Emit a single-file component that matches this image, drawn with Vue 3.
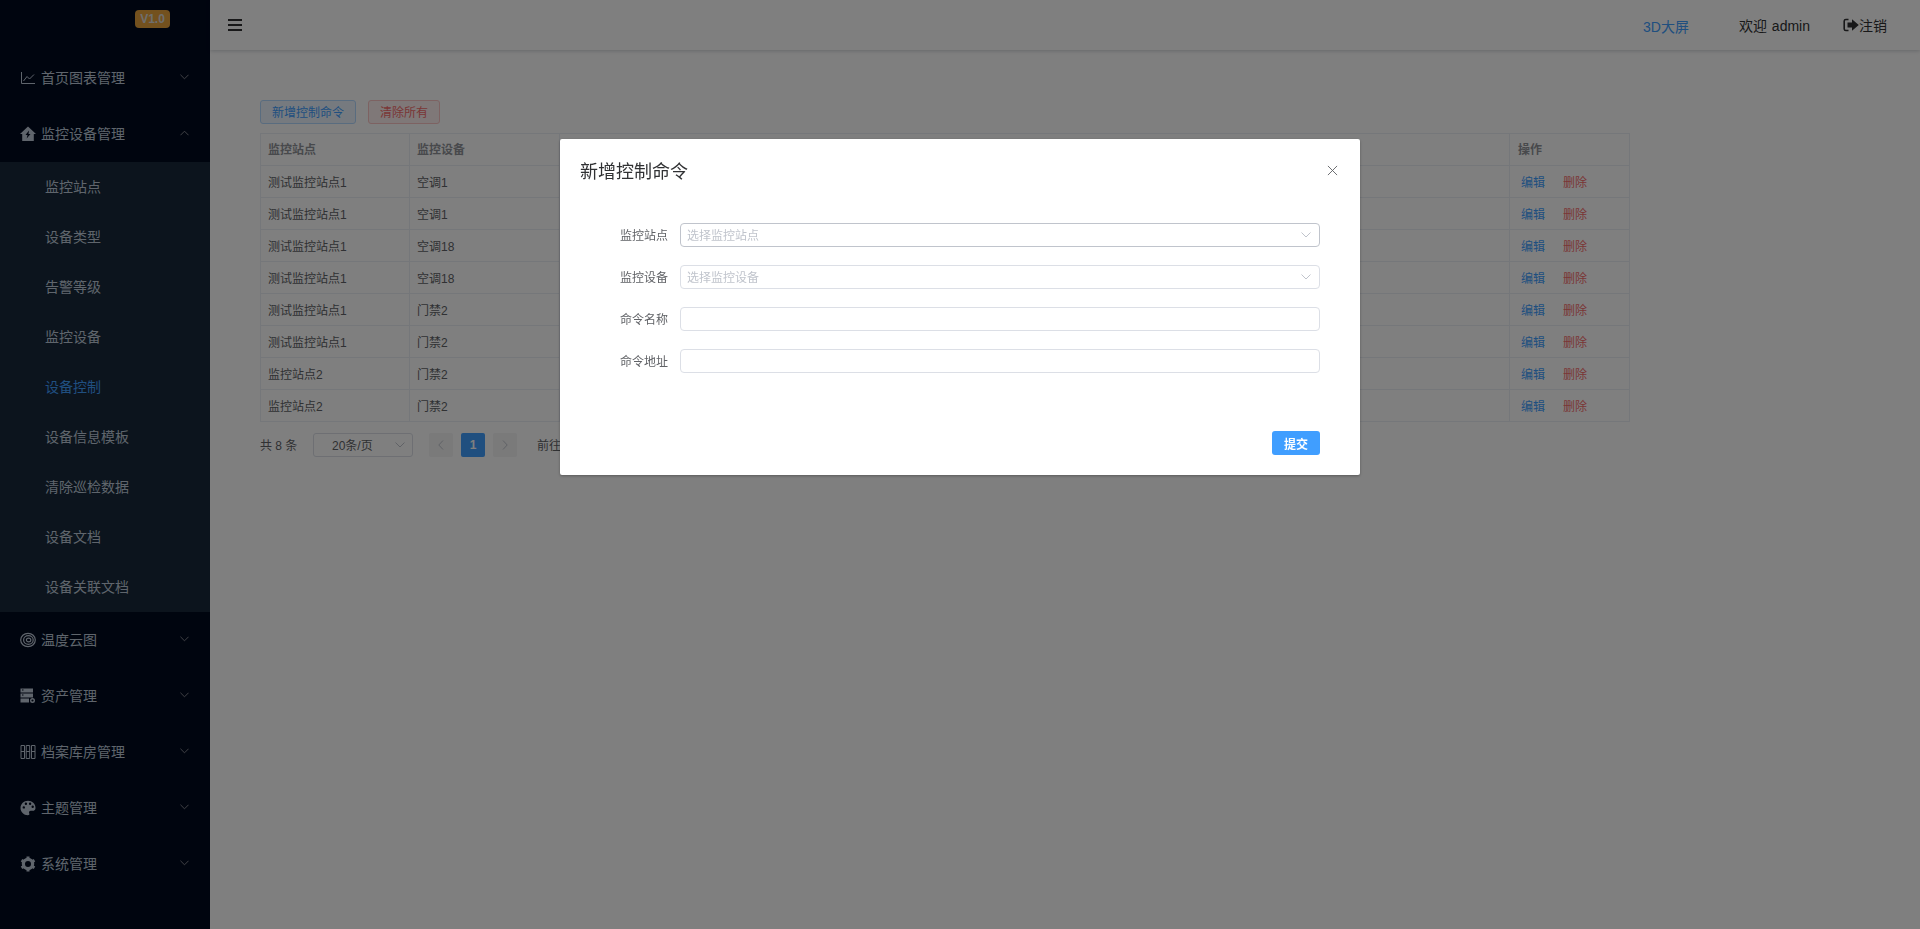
<script setup>
const menusTop = [
  { name: '首页图表管理', icon: 'chart' },
  { name: '监控设备管理', icon: 'home', open: true }
]
const subMenus = ['监控站点', '设备类型', '告警等级', '监控设备', '设备控制', '设备信息模板', '清除巡检数据', '设备文档', '设备关联文档']
const menusBottom = [
  { name: '温度云图', icon: 'rings' },
  { name: '资产管理', icon: 'server' },
  { name: '档案库房管理', icon: 'shelves' },
  { name: '主题管理', icon: 'palette' },
  { name: '系统管理', icon: 'gear' }
]
const rows = [
  ['测试监控站点1', '空调1'],
  ['测试监控站点1', '空调1'],
  ['测试监控站点1', '空调18'],
  ['测试监控站点1', '空调18'],
  ['测试监控站点1', '门禁2'],
  ['测试监控站点1', '门禁2'],
  ['监控站点2', '门禁2'],
  ['监控站点2', '门禁2']
]
const fields = [
  { label: '监控站点', placeholder: '选择监控站点', select: true, hover: true },
  { label: '监控设备', placeholder: '选择监控设备', select: true },
  { label: '命令名称' },
  { label: '命令地址' }
]
</script>

<template>
  <div class="layout">
    <aside class="sidebar">
      <div class="logo"><span class="version">V1.0</span></div>
      <div v-for="m in menusTop" :key="m.name" class="menu-item">
        <svg class="menu-icon" viewBox="0 0 16 16">
          <path v-if="m.icon === 'chart'" d="M1.500 2v11.500H15M3.500 11l3.500-4.500 2.500 2.500 4.500-4.500" fill="none" stroke="currentColor" stroke-width="1" />
          <path v-else d="M8 .5 0 8h2.200v7h11.600V8H16zM9 4.500 5.500 9h2l-.8 3.500L10.500 8h-2z" fill="currentColor" fill-rule="evenodd" />
        </svg>
        <span class="menu-text">{{ m.name }}</span>
        <svg class="arrow" :class="{ up: m.open }" viewBox="0 0 10 6"><path d="M.5.500 5 5 9.500.5" fill="none" stroke="currentColor" /></svg>
      </div>
      <div class="submenu">
        <div v-for="s in subMenus" :key="s" class="sub-item" :class="{ active: s === '设备控制' }">{{ s }}</div>
      </div>
      <div v-for="m in menusBottom" :key="m.name" class="menu-item">
        <svg class="menu-icon" viewBox="0 0 16 16">
          <g v-if="m.icon === 'rings'" fill="none" stroke="currentColor" stroke-width="1.200">
            <ellipse cx="8" cy="8" rx="7.300" ry="6.700" />
            <ellipse cx="8.400" cy="8" rx="4.800" ry="4.300" />
            <ellipse cx="8.600" cy="8" rx="2.200" ry="1.900" />
          </g>
          <g v-else-if="m.icon === 'server'">
            <path d="M.5.500h12.500v4H.5zM.5 5.500h12.500v4H.5zM.5 10.500h8.500v4H.5z" fill="currentColor" />
            <path d="M2 2h1.500M2 7h1.500" stroke="#000a1f" />
            <circle cx="12.500" cy="12.500" r="2.600" fill="#000a1f" />
            <circle cx="12.500" cy="12.500" r="1.800" fill="none" stroke="currentColor" stroke-width="1.400" />
          </g>
          <g v-else-if="m.icon === 'shelves'" fill="none" stroke="currentColor">
            <path d="M1 1.500h3.500v13H1zM6.200 1.500h3.500v13H6.200zM11.500 1.500H15v13h-3.500zM1 7.500h3.500M6.200 7.500h3.500M11.500 7.500H15" />
          </g>
          <path v-else-if="m.icon === 'palette'" d="M8 .8C3.800.8.500 4 .5 8s3.300 7.200 7.300 7.200c1.500 0 1.900-1 1.400-2-.6-1.200.2-2.400 1.600-2.400h2c1.500 0 2.700-1.200 2.700-2.900C15.500 3.700 12.100.8 8 .8zM3.800 8.600a1.200 1.200 0 1 1 0-2.400 1.200 1.200 0 0 1 0 2.400zM5.900 5a1.200 1.200 0 1 1 0-2.400 1.200 1.200 0 0 1 0 2.400zm4.200 0a1.200 1.200 0 1 1 0-2.400 1.200 1.200 0 0 1 0 2.400zm2.600 3a1.200 1.200 0 1 1 0-2.400 1.200 1.200 0 0 1 0 2.400z" fill="currentColor" fill-rule="evenodd" />
          <g v-else stroke="currentColor" fill="none">
            <circle cx="8" cy="8" r="4.600" stroke-width="3.200" />
            <path d="M8 .5v15M1.500 4.250l13 7.500M14.500 4.250l-13 7.500" stroke-width="3" stroke-dasharray="3 9 3" />
          </g>
        </svg>
        <span class="menu-text">{{ m.name }}</span>
        <svg class="arrow" viewBox="0 0 10 6"><path d="M.5.500 5 5 9.500.5" fill="none" stroke="currentColor" /></svg>
      </div>
    </aside>

    <div class="main">
      <header class="topbar">
        <svg class="hamburger" viewBox="0 0 14 12"><path d="M0 0h14v2H0zM0 5h14v2H0zM0 10h14v2H0z" fill="currentColor" /></svg>
        <div class="top-right">
          <a class="screen-link">3D大屏</a>
          <span class="welcome">欢迎 admin</span>
          <span class="logout">
            <svg viewBox="0 0 16 14"><path d="M5.500 1.500H2.800A1.600 1.600 0 0 0 1.200 3v8a1.600 1.600 0 0 0 1.600 1.500h2.700" fill="none" stroke="currentColor" stroke-width="1.600" /><path d="M9 1.200 15.800 7 9 12.800V9.500H4.500v-5H9z" fill="currentColor" /></svg>注销
          </span>
        </div>
      </header>

      <section class="content">
        <div class="toolbar">
          <button class="btn btn-primary">新增控制命令</button>
          <button class="btn btn-danger">清除所有</button>
        </div>
        <table class="grid">
          <colgroup>
            <col style="width: 149px" />
            <col style="width: 150px" />
            <col />
            <col style="width: 120px" />
          </colgroup>
          <thead>
            <tr>
              <th>监控站点</th>
              <th>监控设备</th>
              <th></th>
              <th class="op-head">操作</th>
            </tr>
          </thead>
          <tbody>
            <tr v-for="(r, i) in rows" :key="i">
              <td>{{ r[0] }}</td>
              <td>{{ r[1] }}</td>
              <td></td>
              <td class="actions"><a class="edit">编辑</a><a class="del">删除</a></td>
            </tr>
          </tbody>
        </table>
        <div class="pager">
          <span class="total">共 8 条</span>
          <div class="size-select">
            <span>20条/页</span>
            <svg viewBox="0 0 10 6"><path d="M.5.500 5 5 9.500.5" fill="none" stroke="currentColor" /></svg>
          </div>
          <div class="page-btn">
            <svg viewBox="0 0 6 10"><path d="M5 .5.800 5 5 9.500" fill="none" stroke="currentColor" /></svg>
          </div>
          <div class="page-btn current">1</div>
          <div class="page-btn">
            <svg viewBox="0 0 6 10"><path d="M1 .5 5.200 5 1 9.500" fill="none" stroke="currentColor" /></svg>
          </div>
          <span class="jump">前往</span>
        </div>
      </section>
    </div>

    <div class="mask"></div>

    <div class="dialog-wrap">
      <div class="dialog">
        <div class="dialog-head">
          <span class="dialog-title">新增控制命令</span>
          <svg class="close" viewBox="0 0 12 12"><path d="M1 1l10 10M11 1 1 11" fill="none" stroke="currentColor" /></svg>
        </div>
        <div class="form">
          <div v-for="f in fields" :key="f.label" class="form-row">
            <label>{{ f.label }}</label>
            <div class="input" :class="{ hover: f.hover }">
              <span v-if="f.placeholder">{{ f.placeholder }}</span>
              <svg v-if="f.select" viewBox="0 0 10 6"><path d="M.5.500 5 5 9.500.5" fill="none" stroke="currentColor" /></svg>
            </div>
          </div>
        </div>
        <div class="dialog-foot">
          <button class="submit">提交</button>
        </div>
      </div>
    </div>
  </div>
</template>

<style>
html, body {
  margin: 0;
  height: 100%;
  overflow: hidden;
}
</style>

<style scoped>
.layout {
  display: flex;
  width: 1920px;
  height: 929px;
  overflow: hidden;
  background: #fff;
  font-family: "Liberation Sans", "Noto Sans CJK SC", sans-serif;
  color: #606266;
}

.sidebar {
  flex: none;
  width: 210px;
  background: #000a1f;
  color: #bfcbd9;
  font-size: 14px;
}

.logo {
  height: 50px;
  padding: 10px 40px 0 0;
  box-sizing: border-box;
  display: flex;
  justify-content: flex-end;
  align-items: flex-start;
}

.version {
  width: 35px;
  height: 18px;
  line-height: 18px;
  text-align: center;
  border-radius: 4px;
  background: #e6a23c;
  color: #ddd;
  font-size: 12px;
  font-weight: bold;
}

.menu-item {
  display: flex;
  align-items: center;
  height: 56px;
  padding-left: 20px;
  box-sizing: border-box;
}

.menu-icon {
  width: 16px;
  height: 16px;
  margin: 0 5px 0 0;
  flex: none;
}

.menu-text {
  margin-top: -2px;
}

.arrow {
  width: 9px;
  height: 6px;
  margin-left: auto;
  margin-right: 21px;
  margin-top: -2px;
  color: #909399;
}

.arrow.up {
  transform: rotate(180deg);
}

.submenu {
  background: #18283a;
}

.sub-item {
  height: 50px;
  line-height: 50px;
  padding-left: 45px;
}

.sub-item.active {
  color: #409eff;
}

.main {
  flex: 1;
  min-width: 0;
}

.topbar {
  height: 50px;
  display: flex;
  align-items: center;
  padding: 0 33px 0 18px;
  box-sizing: border-box;
  box-shadow: 0 1px 4px rgba(0, 21, 41, 0.2);
  background: #fff;
  color: #303133;
  font-size: 14px;
}

.hamburger {
  width: 14px;
  height: 12px;
  margin-top: -1px;
}

.top-right {
  margin-left: auto;
  display: flex;
  align-items: center;
}

.screen-link {
  color: #409eff;
  margin-right: 50px;
  margin-top: 1px;
}

.welcome {
  margin-right: 33px;
  margin-top: -1px;
  word-spacing: 1px;
}

.logout {
  display: flex;
  align-items: center;
}

.logout svg {
  width: 16px;
  height: 14px;
}

.content {
  padding: 50px 50px 0 50px;
  width: 1370px;
}

.toolbar {
  display: flex;
  gap: 12px;
  margin-bottom: 9px;
}

.btn {
  height: 24px;
  padding: 0 11px 2px;
  border: 1px solid;
  border-radius: 3px;
  font: 12px "Liberation Sans", "Noto Sans CJK SC", sans-serif;
}

.btn-primary {
  width: 96px;
  background: #ecf5ff;
  border-color: #b3d8ff;
  color: #409eff;
}

.btn-danger {
  background: #fef0f0;
  border-color: #fbc4c4;
  color: #f56c6c;
}

.grid {
  width: 1370px;
  border-collapse: collapse;
  table-layout: fixed;
  font-size: 12px;
  color: #606266;
}

.grid th,
.grid td {
  border: 1px solid #ebeef5;
  padding: 0 7px;
  text-align: left;
  box-sizing: border-box;
}

.grid th {
  height: 32px;
  padding-bottom: 3px;
  color: #909399;
  font-weight: bold;
}

.grid th.op-head {
  padding-left: 8px;
}

.grid td {
  height: 32px;
}

.actions a {
  margin-left: 3px;
  margin-right: 16px;
}

.actions a.edit {
  margin-left: 4px;
  margin-right: 15px;
}

.edit {
  color: #409eff;
}

.del {
  color: #f56c6c;
}

.pager {
  display: flex;
  align-items: center;
  margin-top: 11px;
  height: 24px;
  font-size: 12px;
  color: #606266;
}

.pager span {
  margin-top: -2px;
}

.total {
  width: 53px;
}

.size-select {
  width: 100px;
  height: 24px;
  box-sizing: border-box;
  border: 1px solid #dcdfe6;
  border-radius: 3px;
  display: flex;
  align-items: center;
  padding: 0 7px 0 18px;
  justify-content: space-between;
  margin-right: 16px;
}

.size-select svg {
  width: 10px;
  height: 6px;
  color: #c0c4cc;
}

.page-btn {
  width: 24px;
  height: 24px;
  margin-right: 8px;
  border-radius: 2px;
  background: #f4f4f5;
  color: #c0c4cc;
  display: flex;
  align-items: center;
  justify-content: center;
  font-size: 12px;
  font-weight: bold;
}

.page-btn svg {
  width: 6px;
  height: 10px;
}

.page-btn.current {
  background: #409eff;
  color: #fff;
}

.jump {
  margin-left: 12px;
}

.mask {
  position: fixed;
  inset: 0;
  background: rgba(0, 0, 0, 0.5);
}

.dialog-wrap {
  position: fixed;
  inset: 0;
}

.dialog {
  width: 800px;
  height: 336px;
  margin: 139px auto 0;
  background: #fff;
  border-radius: 2px;
  box-shadow: 0 1px 3px rgba(0, 0, 0, 0.3);
  display: flex;
  flex-direction: column;
  box-sizing: border-box;
}

.dialog-head {
  display: flex;
  align-items: center;
  justify-content: space-between;
  padding: 20px 22px 0 20px;
  height: 44px;
  box-sizing: content-box;
}

.dialog-title {
  font-size: 18px;
  color: #303133;
  margin-top: -22px;
}

.close {
  width: 11px;
  height: 11px;
  color: #606266;
  margin-top: -22px;
}

.form {
  padding: 20px 40px 0 0;
  display: flex;
  flex-direction: column;
  gap: 18px;
}

.form-row {
  display: flex;
  align-items: center;
}

.form-row label {
  width: 120px;
  padding-right: 12px;
  box-sizing: border-box;
  text-align: right;
  font-size: 12px;
  color: #606266;
  margin-top: -2px;
}

.input {
  flex: 1;
  height: 24px;
  box-sizing: border-box;
  border: 1px solid #dcdfe6;
  border-radius: 4px;
  display: flex;
  align-items: center;
  justify-content: space-between;
  padding: 0 8px 0 6px;
  font-size: 12px;
  color: #c0c4cc;
}

.input span {
  margin-top: -2px;
}

.input.hover {
  border-color: #c0c4cc;
}

.input svg {
  width: 10px;
  height: 6px;
}

.dialog-foot {
  margin-top: auto;
  padding: 0 40px 20px;
  display: flex;
  justify-content: flex-end;
}

.submit {
  width: 48px;
  height: 24px;
  border: 0;
  border-radius: 3px;
  background: #409eff;
  color: #fff;
  font: bold 12px "Liberation Sans", "Noto Sans CJK SC", sans-serif;
}
</style>
